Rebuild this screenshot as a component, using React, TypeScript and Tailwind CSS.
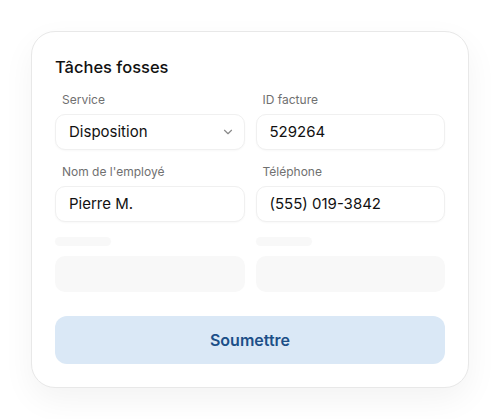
import React from "react";

function Field({ label, value, select }: { label: string; value: string; select?: boolean }) {
  return (
    <div className="flex flex-col">
      <div className="h-4 pl-[7px] text-[12px] leading-4 text-[#707070]">{label}</div>
      <div className="mt-1.5 flex h-9 items-center justify-between rounded-[10px] border border-[#f0f0f0] bg-white pl-[13px] pr-[9px] text-[15px] text-[#111111] shadow-[0_1px_2px_rgba(0,0,0,0.03)]">
        <span>{value}</span>
        {select && (
          <svg width="14" height="14" viewBox="0 0 24 24" fill="none" stroke="#8a8a8a" strokeWidth="2" strokeLinecap="round" strokeLinejoin="round">
            <path d="M6 9l6 6 6-6" />
          </svg>
        )}
      </div>
    </div>
  );
}

function Skeleton() {
  return (
    <div className="flex flex-col">
      <div className="mt-[1px] h-[9px] w-[56px] rounded-full bg-[#f8f8f8]" />
      <div className="mt-[10px] h-9 rounded-[10px] bg-[#f8f8f8]" />
    </div>
  );
}

export default function App() {
  return (
    <div
      className="flex h-[419px] w-[500px] items-start justify-center bg-white pt-[31px]"
      style={{ fontFamily: "Inter, 'Noto Sans', sans-serif" }}
    >
      <div className="w-[438px] rounded-[24px] border border-[#e8e8e8] bg-white px-[23px] pb-[23px] pt-[24px] shadow-[0_12px_32px_rgba(0,0,0,0.05)]">
        <div className="text-[16.5px] font-medium leading-[22px] text-[#111111]">Tâches fosses</div>
        <div className="mt-[14px] grid grid-cols-2 gap-x-[11px] gap-y-[14px]">
          <Field label="Service" value="Disposition" select />
          <Field label="ID facture" value="529264" />
          <Field label="Nom de l'employé" value="Pierre M." />
          <Field label="Téléphone" value="(555) 019-3842" />
          <Skeleton />
          <Skeleton />
        </div>
        <button className="mt-6 flex h-12 w-full items-center justify-center rounded-[12px] bg-[#dae8f6] text-[16px] font-semibold text-[#1c4f88]">
          Soumettre
        </button>
      </div>
    </div>
  );
}
